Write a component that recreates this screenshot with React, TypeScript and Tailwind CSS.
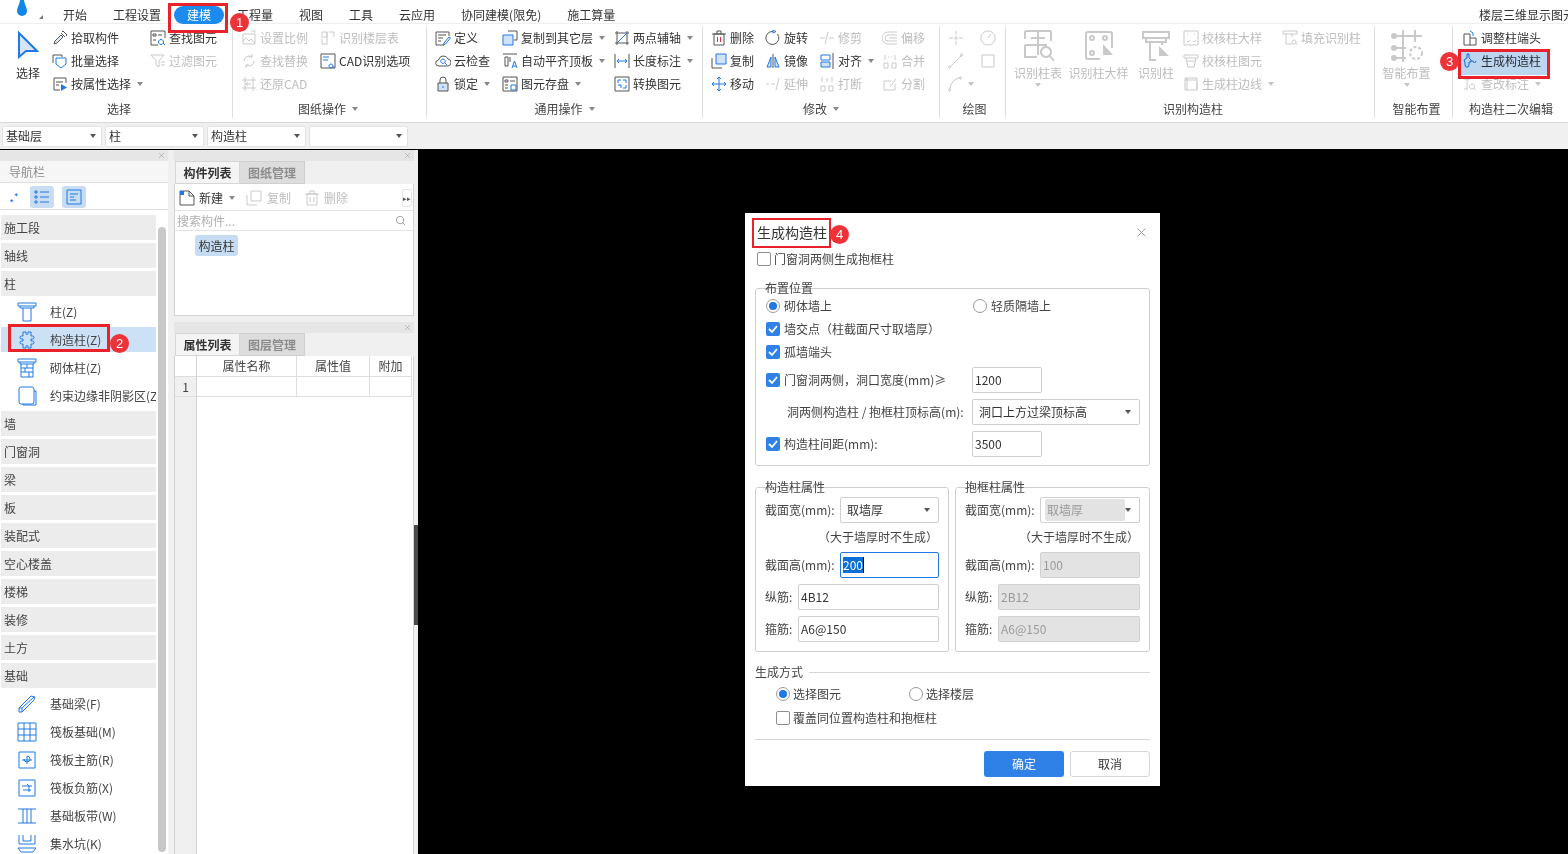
import { X, Search } from "lucide-react";
import type { ReactNode } from "react";

const DARK = "#555555";
const BLUE = "#1f78e5";
const OFF = "#c9c9c9";

type Glyph = { d?: string; a?: string; f?: string; fa?: string };

const glyphs: Record<string, Glyph> = {
  pick: { d: "M2 14l1-3 6-6 2 2-6 6zM9 3l4 4M10 2l1-1 4 4-1 1", f: "M3 12l6-6 1 1-6 6z" },
  batch: { d: "M1 10V2h9v2", a: "M4 5h10v6l-5 4-5-4z" },
  attr: { d: "M14 7V2H2v12h6M4 6h7M4 9h3", fa: "M9 8l6 3.500L9 15z" },
  find: { d: "M15 8V1H1v14h7M3 4h3v2H3zM8 5h4M3 10h3", a: "M11 9.500a2.500 2.500 0 1 0 .01 0M13 13l2 2" },
  filter: { d: "M1 2h13L9 8v6l-3-2V8zM11 9h4M11 12h4" },
  scale: { d: "M2 4h12v10H2zM2 11l3-3 3 3 2-2 4 4M10 1h4v2" },
  floorTable: { d: "M2 2h5v5H2zM9 2h5v5M2 9v5h5M7 2v12" },
  replace: { d: "M3 8a5 5 0 0 1 8-4M13 8a5 5 0 0 1-8 4M11 1v3H8M5 15v-3h3" },
  cadOpt: { d: "M1 1h14v14H1z", a: "M3 4h6M3 7h5M11 11a2 2 0 1 0 .01 0M12.500 13l2 2" },
  restore: { d: "M1 4h14M1 12h14M4 1v14M12 1v14M10 8H6M7 6L5 8l2 2" },
  define: { d: "M14 6V2H1v13h8M3 5h8M3 8h5M3 11h3", a: "M9 13l5-6 1.500 1-5 6-2 1z" },
  cloud: { d: "M4 13a3 3 0 0 1-.5-6A5 5 0 0 1 13 6a3.500 3.500 0 0 1-1 7z", a: "M8 6a2.200 2.200 0 1 0 .01 0M10 10l2 2" },
  lock: { d: "M3 7h10v8H3zM5 7V4a3 3 0 0 1 6 0v3", f: "M3 7h10v8H3z", a: "M8 10v2" },
  copyTo: { d: "M6 1h9v9h-3", a: "M1 5h10v10H1z", f: "M1 5h10v10H1z" },
  autoAlign: { d: "M1 1h14M3 4h3v9H3zM8 4v5", a: "M10 15l2.500-7 2.500 7M11 13h3" },
  save: { d: "M1 1h14v14H1zM3 4h3v2H3zM8 5h5M3 9h3M3 12h3", a: "M9 9h5v5H9z" },
  twoPoint: { d: "M3 1v14M1 13h14M1 3h14M13 1v14", a: "M3 13L13 3" },
  dim: { d: "M1 1v14M15 1v14", a: "M3 8h10M5 6L3 8l2 2M11 6l2 2-2 2" },
  convert: { d: "M1 1h14v14H1z", a: "M4 7V4h3M12 9v3H9M9 4h3v3M4 9h3v3" },
  del: { d: "M3 4h10v11H3zM1 4h14M6 4V1h4v3" },
  rotate: { d: "M12.500 4A6.500 6.500 0 1 1 8 1.500", a: "M8 0l3 1.500L8 3z" },
  trim: { d: "M1 8h5M10 8h5M9 2L6 14" },
  offset: { d: "M15 2H6a6 6 0 0 0 0 12h9M15 5H6a3 3 0 0 0 0 6h9M7 8h8" },
  copy: { d: "M1 5v10h10", a: "M5 1h10v10H5z", f: "M5 1h10v10H5z" },
  mirror: { d: "M8 1v14", a: "M6 4L2 14h4zM10 4l4 10h-4z", f: "M6 4L2 14h4zM10 4l4 10h-4z" },
  align: { d: "M14 0v16", a: "M2 2h9v5H2zM2 9h9v5H2z", f: "M2 9h9v5H2z" },
  merge: { d: "M2 10h4v5H2zM10 10h4v5h-4zM3 2v5M13 2v5M6 4h1M9 4h1" },
  move: { a: "M8 1v14M1 8h14M6 3l2-2 2 2M6 13l2 2 2-2M3 6L1 8l2 2M13 6l2 2-2 2" },
  extend: { d: "M1 8h3M6 8h4M14 2l-3 12" },
  breakIt: { d: "M2 10h4v5H2zM10 10h4v5h-4zM3 1v5M13 1v5M8 2v4" },
  split: { d: "M13 8v6H2V5h7M8 11l6-8" },
  cross: { d: "M8 1v4M8 11v4M1 8h4M11 8h4M7 7h2v2H7z" },
  gauge: { d: "M8 1a7 7 0 1 0 .01 0M8 8l3-4" },
  line: { d: "M2 14L14 2M1.500 13a1 1 0 1 0 .01 0M13.500 1a1 1 0 1 0 .01 0" },
  square: { d: "M2 2h12v12H2z" },
  arc: { d: "M2 14C2 7 7 2 13 2M1.500 13a1 1 0 1 0 .01 0M12.500 1a1 1 0 1 0 .01 0" },
  checkCol: { d: "M1 1h14v14H1zM4 4h1M11 4h1M4 11l1 1 2-2M10 11l1 1 2-2" },
  checkEl: { d: "M1 2h14v3H1zM3 5l2 9M13 5l-2 9M5 14h6M4 8h8" },
  edgeCol: { d: "M2 2h12v12H2zM4 2v12M2 4h12M14 6v8" },
  fillCol: { d: "M1 1h14v3H1zM4 4v10h6M10 4v3M12 10a2 2 0 1 0 .01 0M13.500 13l2 2" },
  adjust: { d: "M2 4h6v11H2zM8 8h6v7H8", a: "M8 1l3 2v3" },
  makeCol: { a: "M5 1h2v4l2 2v2H7v3l-1 2H4l-1-2V9L2 8l1-2 2-1zM9 8h2a1.500 1.500 0 1 0 3 0" },
  edit: { d: "M2 3h6M5 3v10M2 13h4M10 8a2.500 2.500 0 1 0 .01 0M12 12l2 2" },
  newDoc: { d: "M1 15V1h9l5 5v9zM10 1v5h5", fa: "M1 1h4v4H1z" },
  dup: { d: "M5 1h10v10H5zM1 5v10h10" },
  trash: { d: "M3 4h10v11H3zM1 4h14M6 4V1h4v3M6 7v5M10 7v5" },
  sparkle: { a: "M5 11v4M3 13h4M11 3v4M9 5h4" },
  listV: { a: "M1 2h2v2H1zM1 7h2v2H1zM1 12h2v2H1zM6 3h9M6 8h9M6 13h9" },
  detail: { a: "M1 1h14v14H1zM4 5h8M4 8h4M4 11h6" },
};

function Ico({ name, off, size = 16 }: { name: string; off?: boolean; size?: number }) {
  const g = glyphs[name];
  return (
    <svg width={size} height={size} viewBox="0 0 16 16" fill="none" strokeWidth={16 / size} className="shrink-0">
      {g.f && !off && <path d={g.f} fill="#cfe2f8" />}
      {g.d && <path d={g.d} stroke={off ? OFF : DARK} />}
      {g.a && <path d={g.a} stroke={off ? OFF : BLUE} />}
      {g.fa && <path d={g.fa} fill={off ? OFF : BLUE} />}
      {name === "del" && <path d="M6.500 7v5M9.500 7v5" stroke="#d9363e" />}
    </svg>
  );
}

function Caret({ c = "#888888" }: { c?: string }) {
  return <span className="block w-0 h-0 border-x-[3px] border-x-transparent border-t-[4px] shrink-0" style={{ borderTopColor: c }} />;
}

function Item({ icon, label, off, caret }: { icon: string; label: string; off?: boolean; caret?: boolean }) {
  return (
    <div className={`h-[23px] flex items-center gap-[3px] whitespace-nowrap shrink-0 ${off ? "text-[#bdbdbd]" : "text-[#333333]"}`}>
      <Ico name={icon} off={off} />
      <span>{label}</span>
      {caret && <span className="block ml-[3px]"><Caret c={off ? "#c4c4c4" : "#888888"} /></span>}
    </div>
  );
}

function Col({ w, children }: { w: string; children: ReactNode }) {
  return <div className={`flex flex-col shrink-0 ${w}`}>{children}</div>;
}

function Big({ w, label, caret, children }: { w: string; label: string; caret?: boolean; children: ReactNode }) {
  return (
    <div className={`flex flex-col items-center shrink-0 text-[#bdbdbd] ${w}`}>
      <div className="h-[36px] mt-[2px] flex items-center shrink-0">{children}</div>
      <span className="block h-[18px] whitespace-nowrap leading-[18px] shrink-0">{label}</span>
      {caret && <span className="block mt-[1px]"><Caret c="#c4c4c4" /></span>}
    </div>
  );
}

function Group({ w, pl, title, caret, last, cap, children }: { w: string; pl: string; title: string; caret?: boolean; last?: boolean; cap?: string; children: ReactNode }) {
  return (
    <div className={`flex flex-col shrink-0 h-[92px] ${w} ${last ? "" : "border-r border-[#dedede]"}`}>
      <div className={`flex h-[73px] shrink-0 ${pl}`}>{children}</div>
      <div className={`flex-1 flex items-center justify-center gap-[6px] text-[#444444] pt-[1px] ${cap ?? ""}`}>
        <span>{title}</span>
        {caret && <Caret />}
      </div>
    </div>
  );
}

function Badge({ n, className }: { n: number; className: string }) {
  return (
    <span className={`absolute w-[19px] h-[19px] rounded-full bg-[#ee3338] text-white text-[13px] leading-[19px] text-center font-['Liberation_Sans',sans-serif] ${className}`}>
      {n}
    </span>
  );
}

const tabs = ["开始", "工程设置", "建模", "工程量", "视图", "工具", "云应用", "协同建模(限免)", "施工算量"];

function MenuBar() {
  return (
    <div className="h-[24px] flex items-center bg-white border-b border-[#eeeeee] shrink-0 relative">
      <svg width="14" height="17" viewBox="0 0 14 17" className="ml-[15px] mb-[7px] shrink-0">
        <path d="M5 0h4c0 4 3 7 3 11a5 5 0 0 1-10 0c0-4 3-7 3-11z" fill="#1086e8" />
      </svg>
      <span className="ml-[10px] mt-[11px] w-0 h-0 border-l-[4px] border-l-transparent border-b-[4px] border-b-[#777777]" />
      <div className="flex items-center ml-[7px] pt-[6px]">
        {tabs.map((t) => (
          <div
            key={t}
            className={
              t === "建模"
                ? "h-[18px] w-[50px] rounded-full bg-[#1c8bf0] text-white flex items-center justify-center"
                : "px-[13px] text-[#333333] whitespace-nowrap"
            }
          >
            {t}
          </div>
        ))}
      </div>
      <span className="absolute left-[1479px] top-[6px] whitespace-nowrap text-[#333333]">楼层三维显示图元</span>
    </div>
  );
}

function Ribbon() {
  return (
    <div className="h-[98px] pt-[2px] bg-white flex shrink-0">
      <Group w="w-[233px]" pl="pl-0" title="选择" cap="pl-[6px]">
        <div className="w-[52px] pl-[4px] flex flex-col items-center shrink-0">
          <svg width="22" height="28" viewBox="0 0 22 28" className="mt-[5px]">
            <path d="M2 2l18 18H9l-7 6z" fill="#d5e6fa" stroke={BLUE} strokeWidth="2" />
          </svg>
          <span className="mt-[5px] text-[#333333] leading-[18px]">选择</span>
        </div>
        <Col w="w-[98px]">
          <Item icon="pick" label="拾取构件" />
          <Item icon="batch" label="批量选择" />
          <Item icon="attr" label="按属性选择" caret />
        </Col>
        <Col w="w-[82px]">
          <Item icon="find" label="查找图元" />
          <Item icon="filter" label="过滤图元" off />
        </Col>
      </Group>
      <Group w="w-[194px]" pl="pl-[8px]" title="图纸操作" caret cap="pr-[3px]">
        <Col w="w-[79px]">
          <Item icon="scale" label="设置比例" off />
          <Item icon="replace" label="查找替换" off />
          <Item icon="restore" label="还原CAD" off />
        </Col>
        <Col w="w-[100px]">
          <Item icon="floorTable" label="识别楼层表" off />
          <Item icon="cadOpt" label="CAD识别选项" />
        </Col>
      </Group>
      <Group w="w-[276px]" pl="pl-[8px]" title="通用操作" caret>
        <Col w="w-[67px]">
          <Item icon="define" label="定义" />
          <Item icon="cloud" label="云检查" />
          <Item icon="lock" label="锁定" caret />
        </Col>
        <Col w="w-[112px]">
          <Item icon="copyTo" label="复制到其它层" caret />
          <Item icon="autoAlign" label="自动平齐顶板" caret />
          <Item icon="save" label="图元存盘" caret />
        </Col>
        <Col w="w-[85px]">
          <Item icon="twoPoint" label="两点辅轴" caret />
          <Item icon="dim" label="长度标注" caret />
          <Item icon="convert" label="转换图元" />
        </Col>
      </Group>
      <Group w="w-[237px]" pl="pl-[8px]" title="修改" caret>
        <Col w="w-[54px]">
          <Item icon="del" label="删除" />
          <Item icon="copy" label="复制" />
          <Item icon="move" label="移动" />
        </Col>
        <Col w="w-[54px]">
          <Item icon="rotate" label="旋转" />
          <Item icon="mirror" label="镜像" />
          <Item icon="extend" label="延伸" off />
        </Col>
        <Col w="w-[63px]">
          <Item icon="trim" label="修剪" off />
          <Item icon="align" label="对齐" caret />
          <Item icon="breakIt" label="打断" off />
        </Col>
        <Col w="w-[50px]">
          <Item icon="offset" label="偏移" off />
          <Item icon="merge" label="合并" off />
          <Item icon="split" label="分割" off />
        </Col>
      </Group>
      <Group w="w-[66px]" pl="pl-[8px]" title="绘图" cap="pl-[4px]">
        <Col w="w-[32px]">
          <div className="h-[23px] flex items-center"><Ico name="cross" off /></div>
          <div className="h-[23px] flex items-center"><Ico name="line" off /></div>
          <div className="h-[23px] flex items-center gap-[4px]"><Ico name="arc" off /><Caret c="#c4c4c4" /></div>
        </Col>
        <Col w="w-[16px]">
          <div className="h-[23px] flex items-center"><Ico name="gauge" off /></div>
          <div className="h-[23px] flex items-center"><Ico name="square" off /></div>
        </Col>
      </Group>
      <Group w="w-[369px]" pl="pl-[2px]" title="识别构造柱" cap="pl-[6px]">
        <Big w="w-[60px]" label="识别柱表" caret>
          <svg width="32" height="34" viewBox="0 0 32 34" fill="none" stroke={OFF} strokeWidth="2">
            <path d="M3 2h26M3 2v8M16 2v24M3 16h22M3 16v12h12M29 2v10M9 9h14" />
            <path d="M24 18a5 5 0 1 0 .01 0M28 27l4 5" />
          </svg>
        </Big>
        <Big w="w-[61px]" label="识别柱大样">
          <svg width="30" height="32" viewBox="0 0 30 32" fill="none" stroke={OFF} strokeWidth="2">
            <path d="M2 4a2 2 0 0 1 2-2h22a2 2 0 0 1 2 2v14M16 29H4a2 2 0 0 1-2-2V4" />
            <circle cx="8" cy="8" r="2" /><circle cx="21" cy="8" r="2" /><circle cx="8" cy="23" r="2" />
            <path d="M19 14l10 11H19z" fill={OFF} stroke="none" />
          </svg>
        </Big>
        <Big w="w-[54px]" label="识别柱">
          <svg width="30" height="32" viewBox="0 0 30 32" fill="none" stroke={OFF} strokeWidth="2">
            <path d="M2 2h26v6H2zM5 8v4h20V8M9 12v18h6M21 12v3" />
            <path d="M18 16l10 10H18z" fill={OFF} stroke="none" />
          </svg>
        </Big>
        <Col w="w-[99px]">
          <Item icon="checkCol" label="校核柱大样" off />
          <Item icon="checkEl" label="校核柱图元" off />
          <Item icon="edgeCol" label="生成柱边线" off caret />
        </Col>
        <Col w="w-[85px]">
          <Item icon="fillCol" label="填充识别柱" off />
        </Col>
      </Group>
      <Group w="w-[78px]" pl="pl-0" title="智能布置" cap="pl-[6px]">
        <Big w="w-[63px]" label="智能布置" caret>
          <svg width="32" height="34" viewBox="0 0 32 34" fill="none" stroke={OFF} strokeWidth="2">
            <path d="M12 1v32M24 1v12M1 7h30M1 19h14M1 29h14" />
            <circle cx="3" cy="7" r="2" /><circle cx="3" cy="19" r="2" /><circle cx="3" cy="29" r="2" />
            <circle cx="25" cy="24" r="6" strokeDasharray="3 2" />
          </svg>
        </Big>
      </Group>
      <Group w="w-[115px]" pl="pl-[9px]" title="构造柱二次编辑" last cap="pl-[1px]">
        <Col w="w-[100px]">
          <Item icon="adjust" label="调整柱端头" />
          <Item icon="makeCol" label="生成构造柱" />
          <Item icon="edit" label="查改标注" off caret />
        </Col>
      </Group>
    </div>
  );
}

function Combo({ text, w }: { text: string; w: string }) {
  return (
    <div className={`h-[21px] ${w} bg-white border border-[#e2e2e2] rounded-[2px] flex items-center justify-between px-[3px] text-[#333333]`}>
      <span>{text}</span>
      <span className="block mr-[2px]"><Caret c="#555555" /></span>
    </div>
  );
}

function Strip() {
  return (
    <div className="h-[11px] bg-[#e6e6e6] flex items-center justify-end pr-[2px] shrink-0">
      <X size={9} color="#9a9a9a" strokeWidth={1.500} />
    </div>
  );
}

function Tabs({ a, b }: { a: string; b: string }) {
  return (
    <div className="h-[23px] bg-[#f0f0f0] flex pl-[1px] shrink-0">
      <div className="w-[65px] bg-[#f4f4f4] border border-[#d6d6d6] flex items-center justify-center font-bold text-[#333333]">{a}</div>
      <div className="w-[65px] bg-[#dddddd] border border-[#cfcfcf] border-l-0 flex items-center justify-center font-bold text-[#8c8c8c]">{b}</div>
    </div>
  );
}

const navRows: { t: string; icon?: ReactNode; sel?: boolean }[] = [
  { t: "施工段" },
  { t: "轴线" },
  { t: "柱" },
  { t: "柱(Z)", icon: <path d="M1 1h18v3H1zM3 4v2h14V4M6 6v13h8V6" /> },
  {
    t: "构造柱(Z)",
    sel: true,
    icon: <path d="M6 2h3v1.500a1 1 0 0 0 2 0V2h3v4h1.500a1.500 1.500 0 0 1 0 3H14v2h1.500a1.500 1.500 0 0 1 0 3H14v4h-3v-1.500a1 1 0 0 0-2 0V18H6v-4H4.500a1.500 1.500 0 0 1 0-3H6V9H4.500a1.500 1.500 0 0 1 0-3H6z" />,
  },
  { t: "砌体柱(Z)", icon: <path d="M1 1h18v3H1zM3 4v2h14V4M4 6v13h12V6M4 10h12M4 14h12M10 6v4M8 10v4M12 14v5" /> },
  { t: "约束边缘非阴影区(Z", icon: <path d="M2 3a2 2 0 0 1 2-2h11a2 2 0 0 1 2 2v13a2 2 0 0 1-2 2H4a2 2 0 0 1-2-2zM17 5h2v14H6v-1" /> },
  { t: "墙" },
  { t: "门窗洞" },
  { t: "梁" },
  { t: "板" },
  { t: "装配式" },
  { t: "空心楼盖" },
  { t: "楼梯" },
  { t: "装修" },
  { t: "土方" },
  { t: "基础" },
  { t: "基础梁(F)", icon: <path d="M2 14L14 2l4 1-1 3L5 18H2zM2 14h3v4M5 14L17 3" /> },
  { t: "筏板基础(M)", icon: <path d="M1 1h18v18H1zM1 7h18M1 13h18M7 1v18M13 1v18" /> },
  { t: "筏板主筋(R)", icon: <path d="M2 2h16v16H2zM5 10h10M10 6a3 3 0 1 1-3 3M10 6v8" /> },
  { t: "筏板负筋(X)", icon: <path d="M2 2h16v16H2zM5 8h10M6 12h8M10 6l2 2v6" /> },
  { t: "基础板带(W)", icon: <path d="M1 3h18M1 17h18M6 3v14M10 3v14M14 3v14" /> },
  { t: "集水坑(K)", icon: <path d="M2 1v9h16V1M6 1v6h8V1M1 14h18l-3 4H4z" /> },
];

function NavPanel() {
  return (
    <div className="w-[168px] h-full flex flex-col bg-white overflow-hidden shrink-0">
      <Strip />
      <div className="h-[22px] bg-[#f6f6f6] border-b border-[#dddddd] flex items-center pl-[9px] text-[#8c8c8c] shrink-0">导航栏</div>
      <div className="h-[27px] border-b border-[#dddddd] flex items-center pl-[8px] pt-[1px] gap-[4px] shrink-0">
        <Ico name="sparkle" size={12} />
        <span className="ml-[6px] w-[24px] h-[22px] bg-[#c8ddf3] rounded-[3px] flex items-center justify-center"><Ico name="listV" /></span>
        <span className="w-[24px] h-[22px] ml-[4px] bg-[#c8ddf3] rounded-[3px] flex items-center justify-center"><Ico name="detail" /></span>
      </div>
      <div className="flex flex-1 min-h-0 overflow-hidden">
        <div className="w-[155px] ml-[1px] pt-[5px] flex flex-col gap-[3px] shrink-0">
          {navRows.map((r) =>
            r.icon ? (
              <div key={r.t} className={`h-[25px] flex items-center shrink-0 overflow-hidden whitespace-nowrap text-[#444444] ${r.sel ? "bg-[#cce0f6]" : ""}`}>
                <svg width="20" height="20" viewBox="0 0 20 20" fill="none" stroke={BLUE} className="ml-[16px] shrink-0">{r.icon}</svg>
                <span className="ml-[13px]">{r.t}</span>
              </div>
            ) : (
              <div key={r.t} className="h-[25px] bg-[#ececec] flex items-center pl-[3px] text-[#444444] shrink-0">{r.t}</div>
            )
          )}
        </div>
        <div className="w-[8px] ml-[2px] mt-[17px] mb-[2px] bg-[#c8c8c8] rounded-full" />
      </div>
    </div>
  );
}

function MidPanels() {
  return (
    <div className="w-[240px] h-full flex flex-col shrink-0 ml-[6px]">
      <div className="h-[166px] flex flex-col shrink-0">
        <Strip />
        <Tabs a="构件列表" b="图纸管理" />
        <div className="flex-1 bg-white border border-[#d4d4d4] border-t-0 flex flex-col">
          <div className="h-[27px] border-b border-[#e4e4e4] flex items-center pl-[4px] pt-[1px] shrink-0">
            <Ico name="newDoc" />
            <span className="ml-[4px] text-[#333333]">新建</span>
            <span className="block ml-[6px]"><Caret /></span>
            <span className="block ml-[11px]"><Ico name="dup" off /></span>
            <span className="ml-[5px] text-[#bdbdbd]">复制</span>
            <span className="block ml-[13px]"><Ico name="trash" off /></span>
            <span className="ml-[4px] text-[#bdbdbd]">删除</span>
            <span className="ml-auto mr-[1px] w-[10px] h-[18px] border border-[#e4e4e4] rounded-[2px] text-[7px] leading-[16px] text-center text-[#555555]">▸▸</span>
          </div>
          <div className="h-[20px] border-b border-[#e4e4e4] flex items-center justify-between px-[2px] text-[#b0b0b0] shrink-0">
            <span>搜索构件...</span>
            <Search size={11} color="#999999" className="mr-[5px]" />
          </div>
          <div className="pl-[20px] pt-[4px]">
            <span className="inline-flex h-[21px] w-[43px] items-center justify-center bg-[#c5dcf2] rounded-[3px] text-[#333333]">构造柱</span>
          </div>
        </div>
      </div>
      <div className="flex-1 mt-[6px] flex flex-col min-h-0">
        <Strip />
        <Tabs a="属性列表" b="图层管理" />
        <div className="flex-1 flex bg-white border-r border-[#d4d4d4] text-[#444444]">
          <div className="w-[23px] bg-[#f0f0f0] border-l border-[#d4d4d4] border-r shrink-0">
            <div className="h-[21px] border-b border-[#dddddd] bg-white" />
            <div className="h-[20px] border-b border-[#dddddd] flex items-center justify-center">1</div>
          </div>
          {[
            ["w-[100px]", "属性名称"],
            ["w-[73px]", "属性值"],
            ["w-[42px]", "附加"],
          ].map(([w, t]) => (
            <div key={t} className={`${w} shrink-0`}>
              <div className="h-[21px] border-b border-r border-[#dddddd] flex items-center justify-center">{t}</div>
              <div className="h-[20px] border-b border-r border-[#dddddd]" />
            </div>
          ))}
        </div>
      </div>
    </div>
  );
}

function Check({ on }: { on?: boolean }) {
  return on ? (
    <span className="w-[14px] h-[14px] rounded-[2px] bg-[#2f80e7] flex items-center justify-center shrink-0">
      <svg width="10" height="10" viewBox="0 0 10 10" fill="none" stroke="white" strokeWidth="1.800"><path d="M1 5l3 3 5-6" /></svg>
    </span>
  ) : (
    <span className="w-[14px] h-[14px] rounded-[2px] bg-white border border-[#8f8f8f] shrink-0" />
  );
}

function Radio({ on }: { on?: boolean }) {
  return (
    <span className="w-[14px] h-[14px] rounded-full border border-[#9a9a9a] flex items-center justify-center shrink-0">
      {on && <span className="w-[8px] h-[8px] rounded-full bg-[#1f78e5]" />}
    </span>
  );
}

function Field({ value, w, off, focus }: { value: string; w: string; off?: boolean; focus?: boolean }) {
  if (focus) {
    return (
      <div className={`h-[26px] ${w} border border-[#1f78e5] rounded-[2px] flex items-center px-[2px] bg-white`}>
        <span className="bg-[#0a6fd6] text-white leading-[16px] border-r border-black">{value}</span>
      </div>
    );
  }
  return (
    <div className={`h-[26px] ${w} border rounded-[2px] flex items-center px-[2px] ${off ? "bg-[#e3e3e3] border-[#d0d0d0] text-[#9a9a9a]" : "bg-white border-[#cfcfcf] text-[#333333]"}`}>
      {value}
    </div>
  );
}

function Sel({ value, w, off }: { value: string; w: string; off?: boolean }) {
  return (
    <div className={`h-[26px] ${w} bg-white border border-[#cfcfcf] rounded-[2px] flex items-center justify-between pr-[8px] ${off ? "pl-[4px]" : "pl-[6px]"}`}>
      {off ? (
        <span className="w-[81px] h-[22px] bg-[#e3e3e3] rounded-[2px] flex items-center pl-[2px] text-[#9a9a9a]">{value}</span>
      ) : (
        <span className="text-[#333333]">{value}</span>
      )}
      <Caret c="#555555" />
    </div>
  );
}

function Legend({ t }: { t: string }) {
  return <span className="absolute left-[9px] top-[-10px] leading-[18px] text-[#444444]">{t}</span>;
}

function PropBox({ title, off, wid, hei, main, hoop, w }: { title: string; off?: boolean; wid: string; hei: string; main: string; hoop: string; w: string }) {
  return (
    <div className={`relative ${w} h-[165px] border border-[#cfcfcf] rounded-[3px] pl-[9px] pr-[9px] pt-[9px] text-[#444444]`}>
      <Legend t={title} />
      <div className="flex items-center justify-between h-[26px]">
        <span>截面宽(mm):</span>
        <Sel value={wid} w={off ? "w-[100px]" : "w-[99px]"} off={off} />
      </div>
      <div className="h-[18px] mt-[5px] flex justify-end items-center pr-[1px] whitespace-nowrap">（大于墙厚时不生成）</div>
      <div className="flex items-center justify-between h-[26px] mt-[6px]">
        <span>截面高(mm):</span>
        <Field value={hei} w={off ? "w-[100px]" : "w-[99px]"} off={off} focus={!off} />
      </div>
      <div className="flex items-center justify-between h-[26px] mt-[6px]">
        <span>纵筋:</span>
        <Field value={main} w={off ? "w-[142px]" : "w-[141px]"} off={off} />
      </div>
      <div className="flex items-center justify-between h-[26px] mt-[6px]">
        <span>箍筋:</span>
        <Field value={hoop} w={off ? "w-[142px]" : "w-[141px]"} off={off} />
      </div>
    </div>
  );
}

function Dialog() {
  return (
    <div className="absolute left-[331px] top-[63px] w-[415px] h-[573px] bg-white px-[10px] text-[#444444] flex flex-col">
      <div className="h-[24px] mt-[8px] pl-[2px] pb-[2px] flex items-center justify-between text-[14px] text-[#333333] shrink-0">
        <span>生成构造柱</span>
        <X size={15} color="#888888" strokeWidth={1.300} className="mr-[1px]" />
      </div>
      <div className="h-[18px] mt-[5px] pl-[2px] flex items-center gap-[3px] shrink-0"><Check /><span>门窗洞两侧生成抱框柱</span></div>

      <div className="relative h-[178px] mt-[20px] border border-[#cfcfcf] rounded-[3px] pl-[10px] pt-[8px] shrink-0">
        <Legend t="布置位置" />
        <div className="h-[18px] flex items-center">
          <div className="w-[207px] flex items-center gap-[4px]"><Radio on /><span>砌体墙上</span></div>
          <div className="flex items-center gap-[4px]"><Radio /><span>轻质隔墙上</span></div>
        </div>
        <div className="h-[18px] mt-[5px] flex items-center gap-[4px]"><Check on /><span>墙交点（柱截面尺寸取墙厚）</span></div>
        <div className="h-[18px] mt-[5px] flex items-center gap-[4px]"><Check on /><span>孤墙端头</span></div>
        <div className="h-[26px] mt-[6px] flex items-center">
          <div className="w-[206px] flex items-center gap-[4px]"><Check on /><span>门窗洞两侧，洞口宽度(mm)≥</span></div>
          <Field value="1200" w="w-[70px]" />
        </div>
        <div className="h-[26px] mt-[6px] flex items-center">
          <span className="w-[206px] pl-[21px] whitespace-nowrap">洞两侧构造柱 / 抱框柱顶标高(m):</span>
          <Sel value="洞口上方过梁顶标高" w="w-[168px]" />
        </div>
        <div className="h-[26px] mt-[6px] flex items-center">
          <div className="w-[206px] flex items-center gap-[4px]"><Check on /><span>构造柱间距(mm):</span></div>
          <Field value="3500" w="w-[70px]" />
        </div>
      </div>

      <div className="flex gap-[6px] mt-[21px] shrink-0">
        <PropBox title="构造柱属性" w="w-[194px]" wid="取墙厚" hei="200" main="4B12" hoop="A6@150" />
        <PropBox title="抱框柱属性" w="w-[195px]" off wid="取墙厚" hei="100" main="2B12" hoop="A6@150" />
      </div>

      <div className="h-[18px] mt-[11px] flex items-center gap-[6px] shrink-0">
        <span>生成方式</span>
        <span className="flex-1 h-px bg-[#d4d4d4]" />
      </div>
      <div className="h-[18px] mt-[4px] pl-[21px] flex items-center shrink-0">
        <div className="w-[133px] flex items-center gap-[3px]"><Radio on /><span>选择图元</span></div>
        <div className="flex items-center gap-[3px]"><Radio /><span>选择楼层</span></div>
      </div>
      <div className="h-[18px] mt-[6px] pl-[21px] flex items-center gap-[3px] shrink-0"><Check /><span>覆盖同位置构造柱和抱框柱</span></div>
      <div className="h-px bg-[#d4d4d4] mt-[12px] shrink-0" />
      <div className="flex justify-end gap-[6px] mt-[11px] shrink-0">
        <button className="w-[80px] h-[26px] rounded-[3px] bg-[#2f80e7] text-white">确定</button>
        <button className="w-[80px] h-[26px] rounded-[3px] bg-white border border-[#d4d4d4] text-[#333333]">取消</button>
      </div>
    </div>
  );
}

export default function App() {
  return (
    <div className="relative w-[1568px] h-[854px] overflow-hidden flex flex-col bg-[#f0f0f0] text-[12px] font-['Noto_Sans_CJK_SC','Liberation_Sans',sans-serif]">
      <MenuBar />
      <Ribbon />
      <div className="h-[27px] border-t border-[#d8d8d8] bg-[#f0f0f0] flex items-center pl-[2px] gap-[3px] shrink-0">
        <Combo text="基础层" w="w-[100px]" />
        <Combo text="柱" w="w-[99px]" />
        <Combo text="构造柱" w="w-[99px]" />
        <Combo text="" w="w-[99px]" />
      </div>
      <div className="flex-1 min-h-0 flex border-t border-black">
        <NavPanel />
        <MidPanels />
        <div className="flex-1 relative bg-black">
          <div className="w-[4px] h-full pt-[375px] bg-[#f0f0f0]">
            <div className="w-[4px] h-[100px] bg-[#4a4a4a]" />
          </div>
          <Dialog />
        </div>
      </div>

      {/* annotation overlays */}
      <div className="absolute left-[1459px] top-[52px] w-[88px] h-[23px] bg-[#bcd6f0] mix-blend-multiply" />
      <div className="absolute left-[168px] top-[3px] w-[60px] h-[30px] border-[3px] border-[#e8212b]" />
      <Badge n={1} className="left-[230px] top-[13px]" />
      <div className="absolute left-[8px] top-[324px] w-[102px] h-[28px] border-[3px] border-[#e8212b]" />
      <Badge n={2} className="left-[110px] top-[334px]" />
      <div className="absolute left-[1458px] top-[49px] w-[92px] h-[30px] border-[3px] border-[#e8212b]" />
      <Badge n={3} className="left-[1440px] top-[52px]" />
      <div className="absolute left-[752px] top-[218px] w-[79px] h-[30px] border-[2px] border-[#e8212b]" />
      <Badge n={4} className="left-[830px] top-[225px]" />
    </div>
  );
}
